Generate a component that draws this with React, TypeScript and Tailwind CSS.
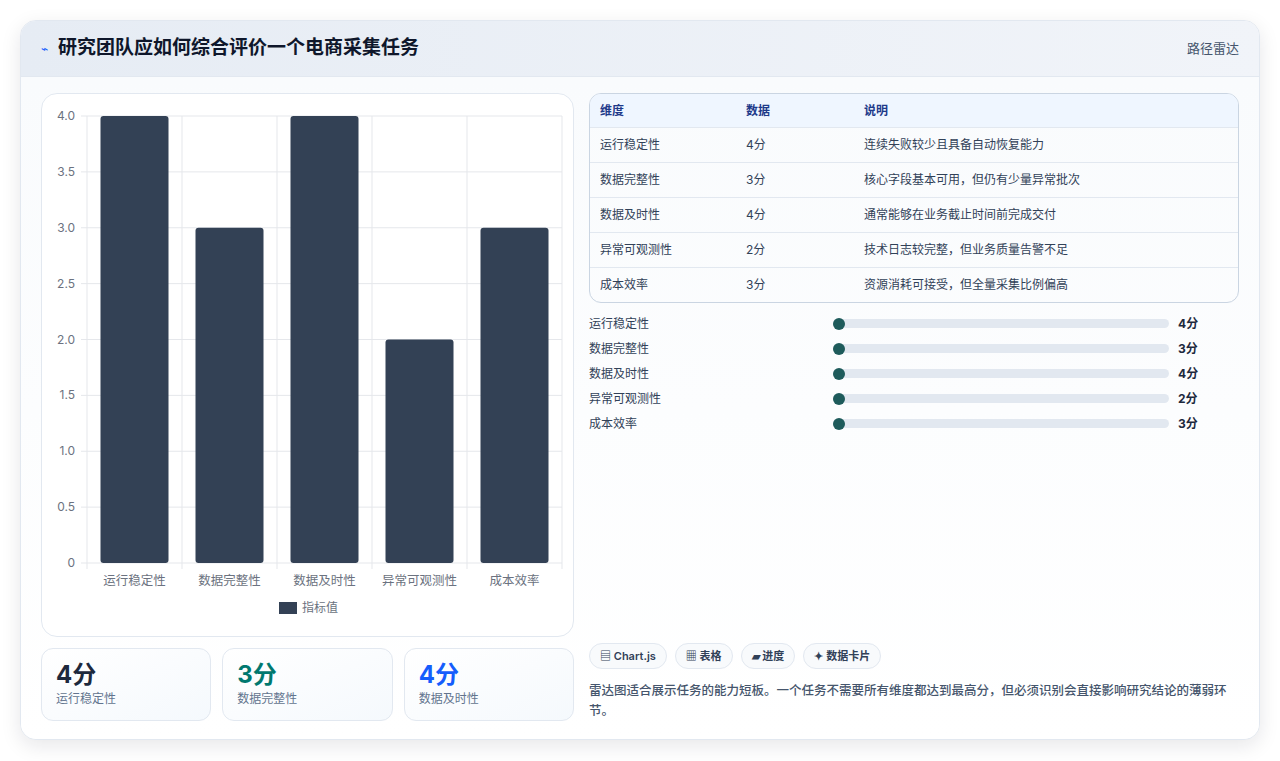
const dims = [
  { name: "运行稳定性", score: 4, note: "连续失败较少且具备自动恢复能力" },
  { name: "数据完整性", score: 3, note: "核心字段基本可用，但仍有少量异常批次" },
  { name: "数据及时性", score: 4, note: "通常能够在业务截止时间前完成交付" },
  { name: "异常可观测性", score: 2, note: "技术日志较完整，但业务质量告警不足" },
  { name: "成本效率", score: 3, note: "资源消耗可接受，但全量采集比例偏高" },
];

function BarChart() {
  const x0 = 45;
  const x1 = 520;
  const yTop = 22;
  const yBot = 469;
  const ticks = [0, 0.5, 1, 1.5, 2, 2.5, 3, 3.5, 4];
  const cw = (x1 - x0) / dims.length;
  const y = (v: number) => yBot - (v / 4) * (yBot - yTop);
  return (
    <svg width="533" height="543" className="block">
      {ticks.map((t) => (
        <g key={t}>
          <line x1={x0 - 6} x2={x1} y1={y(t)} y2={y(t)} stroke="#e5e7eb" />
          <text x={x0 - 12} y={y(t) + 4} textAnchor="end" fontSize="12" fill="#6b7280">
            {t === 0 ? "0" : t.toFixed(1)}
          </text>
        </g>
      ))}
      {dims.map((_, i) => (
        <line key={i} x1={x0 + i * cw} x2={x0 + i * cw} y1={yTop} y2={yBot + 6} stroke="#e5e7eb" />
      ))}
      <line x1={x1} x2={x1} y1={yTop} y2={yBot + 6} stroke="#e5e7eb" />
      {dims.map((d, i) => (
        <g key={d.name}>
          <rect x={x0 + i * cw + 13.5} y={y(d.score)} width={68} height={yBot - y(d.score)} rx="3" fill="#334155" />
          <text x={x0 + i * cw + cw / 2} y={yBot + 22} textAnchor="middle" fontSize="12.5" fill="#6b7280">
            {d.name}
          </text>
        </g>
      ))}
      <rect x="237" y="508" width="18" height="12" fill="#334155" />
      <text x="260" y="518" fontSize="12" fill="#6b7280">指标值</text>
    </svg>
  );
}

export default function App() {
  return (
    <div className="min-h-[761px] bg-white p-5 pb-0" style={{ fontFamily: "Inter, 'Noto Sans CJK SC', sans-serif" }}>
      <div className="overflow-hidden rounded-2xl border border-slate-200 bg-white shadow-[0_6px_20px_rgba(15,23,42,0.10)]">
        <div className="flex h-14 items-center justify-between border-b border-slate-200 bg-gradient-to-r from-[#e6ecf4] to-[#f1f4f9] px-5">
          <div className="flex items-center gap-2.5">
            <span className="text-xs text-blue-600">⌁</span>
            <span className="text-[19px] font-bold text-slate-900">研究团队应如何综合评价一个电商采集任务</span>
          </div>
          <span className="text-[13px] text-slate-600">路径雷达</span>
        </div>
        <div className="flex gap-[15px] bg-gradient-to-b from-[#f9fbfd] to-white px-5 pb-[18px] pt-4">
          <div className="flex w-[533px] shrink-0 flex-col gap-[11px]">
            <div className="h-[544px] overflow-hidden rounded-2xl border border-slate-200 bg-white">
              <BarChart />
            </div>
            <div className="grid grid-cols-3 gap-[11px]">
              {[
                ["4分", "运行稳定性", "text-slate-800"],
                ["3分", "数据完整性", "text-teal-700"],
                ["4分", "数据及时性", "text-blue-600"],
              ].map(([v, l, c]) => (
                <div key={l} className="h-[73px] rounded-xl border border-slate-200 bg-gradient-to-br from-white to-[#f5f9fd] px-3.5 pt-2.5">
                  <div className={`text-[24px] font-bold leading-8 ${c}`}>{v}</div>
                  <div className="text-xs text-slate-500">{l}</div>
                </div>
              ))}
            </div>
          </div>
          <div className="flex flex-1 flex-col">
            <div className="overflow-hidden rounded-xl border border-slate-300 text-xs">
              <div className="flex h-[33px] items-center bg-[#eff6ff] font-bold text-[#1e3a8a]">
                <div className="w-[156px] pl-2.5">维度</div>
                <div className="w-[118px]">数据</div>
                <div>说明</div>
              </div>
              {dims.map((d) => (
                <div key={d.name} className="flex h-[35px] items-center border-t border-slate-200 text-slate-700">
                  <div className="w-[156px] pl-2.5">{d.name}</div>
                  <div className="w-[118px]">{d.score}分</div>
                  <div>{d.note}</div>
                </div>
              ))}
            </div>
            <div className="mt-2 flex flex-col">
              {dims.map((d) => (
                <div key={d.name} className="flex h-[25px] items-center text-xs text-slate-700">
                  <div className="w-[244px]">{d.name}</div>
                  <div className="relative h-[9px] w-[336px] rounded-full bg-slate-200">
                    <div className="absolute left-0 top-1/2 h-3 w-3 -translate-y-1/2 rounded-full bg-[#1e5b5b]" />
                  </div>
                  <div className="ml-[9px] font-bold text-slate-800">{d.score}分</div>
                </div>
              ))}
            </div>
            <div className="mt-auto flex gap-2 pt-4">
              {["▤ Chart.js", "▦ 表格", "▰ 进度", "✦ 数据卡片"].map((t) => (
                <span key={t} className="rounded-full border border-slate-200 bg-[#f8fafc] px-2.5 py-1 text-[11px] font-semibold text-slate-700">
                  {t}
                </span>
              ))}
            </div>
            <p className="mt-3 text-[12.5px] font-medium leading-5 text-slate-600">
              雷达图适合展示任务的能力短板。一个任务不需要所有维度都达到最高分，但必须识别会直接影响研究结论的薄弱环节。
            </p>
          </div>
        </div>
      </div>
    </div>
  );
}
